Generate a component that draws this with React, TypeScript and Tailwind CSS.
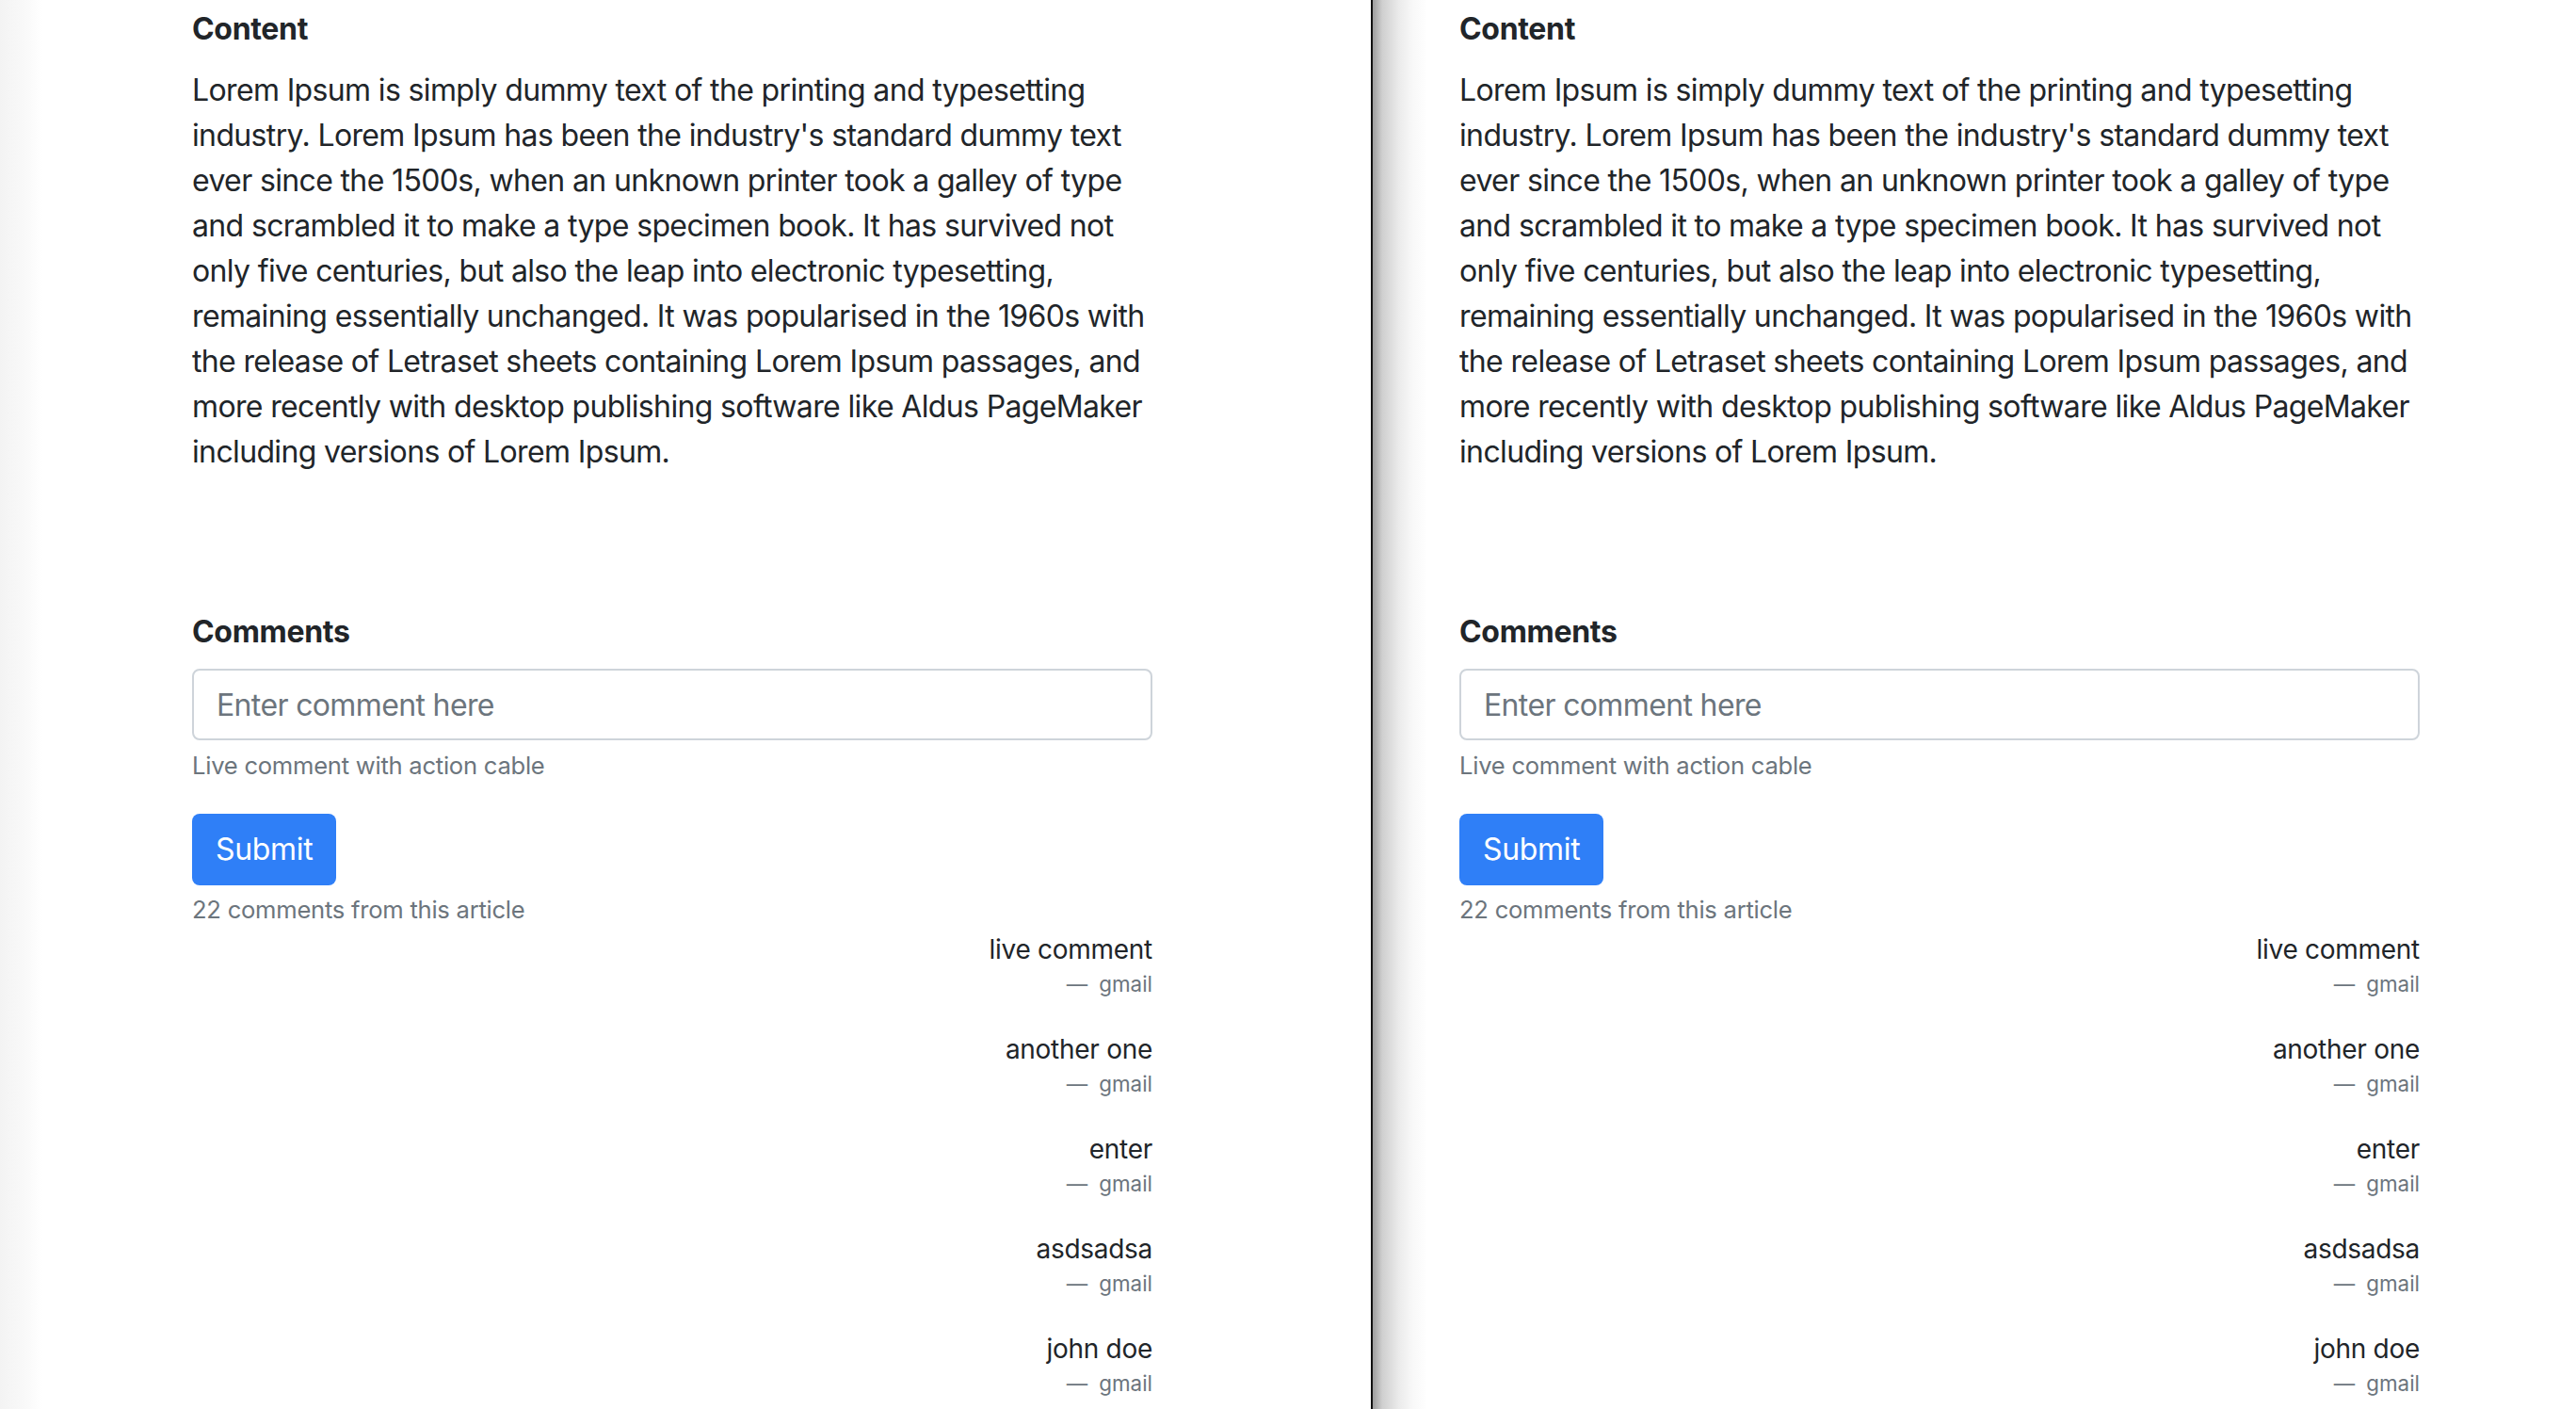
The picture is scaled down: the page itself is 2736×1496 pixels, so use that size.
const LOREM =
  "Lorem Ipsum is simply dummy text of the printing and typesetting industry. Lorem Ipsum has been the industry's standard dummy text ever since the 1500s, when an unknown printer took a galley of type and scrambled it to make a type specimen book. It has survived not only five centuries, but also the leap into electronic typesetting, remaining essentially unchanged. It was popularised in the 1960s with the release of Letraset sheets containing Lorem Ipsum passages, and more recently with desktop publishing software like Aldus PageMaker including versions of Lorem Ipsum.";

const comments = [
  { body: 'live comment', author: 'gmail' },
  { body: 'another one', author: 'gmail' },
  { body: 'enter', author: 'gmail' },
  { body: 'asdsadsa', author: 'gmail' },
  { body: 'john doe', author: 'gmail' },
];

function ArticlePage() {
  return (
    <div className="w-[1020px] pt-[12px] text-[#212529]">
      <h5 className="text-[32px] leading-[38px] font-bold tracking-[-0.01em]">Content</h5>
      <p className="mt-[22px] text-[32px] leading-[48px] tracking-[-0.02em]">{LOREM}</p>

      <h5 className="mt-[148px] text-[32px] leading-[38px] font-bold tracking-[-0.01em]">Comments</h5>
      <form className="mt-[20px]" onSubmit={e => e.preventDefault()}>
        <input
          type="text"
          placeholder="Enter comment here"
          className="block h-[76px] w-full rounded-[8px] border-2 border-[#ced4da] bg-white px-[24px] text-[32px] tracking-[-0.02em] text-[#495057] outline-none placeholder:text-[#6c757d]"
        />
        <small className="mt-[8px] block text-[25.6px] leading-[38px] tracking-[-0.01em] text-[#6c757d]">Live comment with action cable</small>
        <button
          type="submit"
          className="mt-[32px] h-[76px] rounded-[8px] bg-[#2f7ff7] px-[25px] text-[32px] leading-[48px] tracking-[-0.01em] text-white"
        >
          Submit
        </button>
      </form>
      <small className="mt-[7px] block text-[25.6px] leading-[38px] tracking-[-0.01em] text-[#6c757d]">22 comments from this article</small>

      <div className="mt-[3px] flex flex-col gap-[32px] text-right">
        {comments.map((c, i) => (
          <blockquote key={i}>
            <p className="text-[28px] leading-[40px] tracking-[-0.01em]">{c.body}</p>
            <footer className="text-[22.4px] leading-[34px] text-[#6c757d]">
              <span className="mr-[12px]">—</span>
              {c.author}
            </footer>
          </blockquote>
        ))}
      </div>
    </div>
  );
}

export default function App() {
  return (
    <div className="flex h-[1496px] w-[2736px] overflow-hidden bg-white font-['Inter','Liberation_Sans',sans-serif]">
      <div className="flex w-[1456px] shrink-0 bg-[linear-gradient(to_right,#f3f3f3,#fafafa_30px,#ffffff_45px)] pl-[204px]">
        <ArticlePage />
      </div>
      <div className="w-[2px] shrink-0 bg-[#111]" />
      <div className="flex flex-1 bg-[linear-gradient(to_right,#9c9c9c,#cfcfcf_10px,#ebebeb_28px,#f8f8f8_42px,#ffffff_58px)] pl-[92px]">
        <ArticlePage />
      </div>
    </div>
  );
}
